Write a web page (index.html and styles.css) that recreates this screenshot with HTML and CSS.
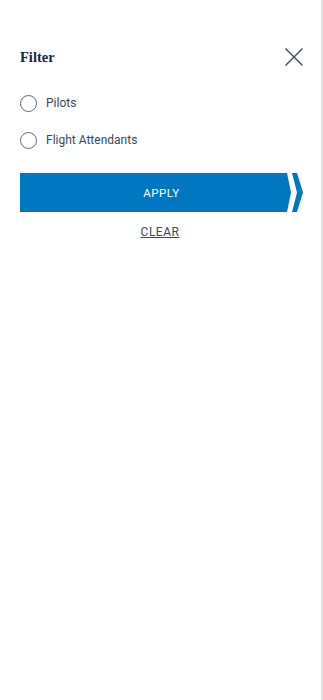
FILE: index.html
```html
<!DOCTYPE html>
<html lang="en">
<head>
    <meta charset="UTF-8">
    <meta name="viewport" content="width=device-width, initial-scale=1.0">
    <title>Filter</title>
    <link rel="stylesheet" href="styles.css">
</head>
<body>
    <div class="panel">
        <div class="panel-header">
            <h2 class="panel-title">Filter</h2>
            <button class="close-btn" aria-label="Close">
                <svg width="20" height="20" viewBox="0 0 20 20">
                    <path d="M1.5 1.5 L18.5 18.5 M18.5 1.5 L1.5 18.5" stroke="#36495a" stroke-width="1.3" fill="none"/>
                </svg>
            </button>
        </div>

        <div class="options">
            <label class="option">
                <span class="radio"></span>
                <span class="option-label">Pilots</span>
            </label>
            <label class="option">
                <span class="radio"></span>
                <span class="option-label">Flight Attendants</span>
            </label>
        </div>

        <button class="apply-btn">
            <svg class="apply-shape" width="283" height="39" viewBox="0 0 283 39" preserveAspectRatio="none">
                <polygon points="0,0 267,0 271,19.5 267,39 0,39" fill="#0078c1"/>
                <polygon points="272,0 277,0 283,19.5 277,39 272,39 277,19.5" fill="#0078c1"/>
            </svg>
            <span class="apply-text">APPLY</span>
        </button>

        <div class="clear-row">
            <a class="clear-link" href="#">CLEAR</a>
        </div>
    </div>
</body>
</html>
```

FILE: styles.css
```css
* {
    margin: 0;
    padding: 0;
    box-sizing: border-box;
}

body {
    font-family: Roboto, 'Noto Sans', sans-serif;
    background: #ffffff;
    height: 100vh;
}

.panel {
    width: 323px;
    height: 700px;
    border-right: 2px solid #e3e3e3;
    padding: 47px 21px 0 20px;
}

.panel-header {
    display: flex;
    justify-content: space-between;
    align-items: center;
    height: 20px;
}

.panel-title {
    font-family: 'Liberation Serif', 'DejaVu Serif', serif;
    font-size: 14.5px;
    font-weight: bold;
    color: #13293d;
}

.close-btn {
    background: none;
    border: none;
    width: 20px;
    height: 20px;
    margin-right: -4px;
    cursor: pointer;
}

.close-btn svg {
    display: block;
}

.options {
    margin-top: 28px;
    display: flex;
    flex-direction: column;
    gap: 21px;
}

.option {
    display: flex;
    align-items: center;
    height: 16px;
    cursor: pointer;
}

.radio {
    width: 17px;
    height: 17px;
    border: 1.3px solid #5e6b78;
    border-radius: 50%;
    margin-right: 9px;
}

.option-label {
    font-size: 12px;
    color: #36495a;
}

.apply-btn {
    position: relative;
    display: block;
    margin-top: 25px;
    width: 283px;
    height: 39px;
    border: none;
    background: none;
    cursor: pointer;
}

.apply-shape {
    position: absolute;
    left: 0;
    top: 0;
}

.apply-text {
    position: relative;
    display: block;
    width: 283px;
    font-family: Roboto, sans-serif;
    font-size: 11.5px;
    letter-spacing: 0.5px;
    color: #ffffff;
}

.clear-row {
    margin-top: 9px;
    text-align: center;
}

.clear-link {
    font-size: 12px;
    letter-spacing: 0.5px;
    color: #36495a;
    text-decoration: underline;
}
```
